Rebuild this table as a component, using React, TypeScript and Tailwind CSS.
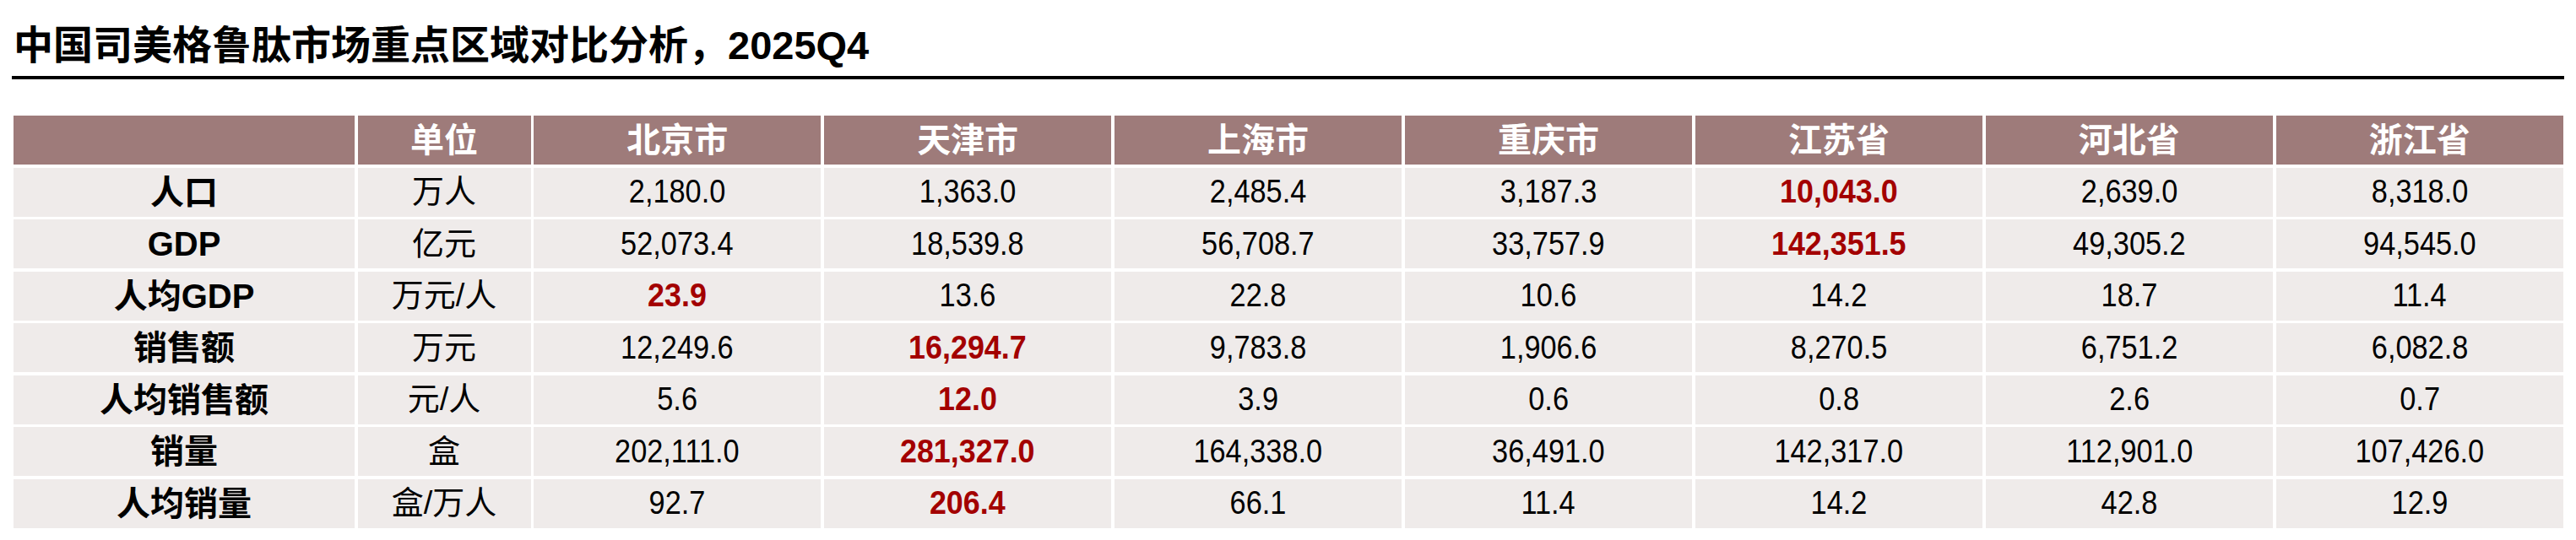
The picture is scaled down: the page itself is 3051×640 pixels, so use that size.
const regions = ["北京市", "天津市", "上海市", "重庆市", "江苏省", "河北省", "浙江省"];

type Row = { label: string; unit: string; values: string[]; top: number };

// top = index of the region with the highest value (shown in red)
const rows: Row[] = [
  { label: "人口", unit: "万人", values: ["2,180.0", "1,363.0", "2,485.4", "3,187.3", "10,043.0", "2,639.0", "8,318.0"], top: 4 },
  { label: "GDP", unit: "亿元", values: ["52,073.4", "18,539.8", "56,708.7", "33,757.9", "142,351.5", "49,305.2", "94,545.0"], top: 4 },
  { label: "人均GDP", unit: "万元/人", values: ["23.9", "13.6", "22.8", "10.6", "14.2", "18.7", "11.4"], top: 0 },
  { label: "销售额", unit: "万元", values: ["12,249.6", "16,294.7", "9,783.8", "1,906.6", "8,270.5", "6,751.2", "6,082.8"], top: 1 },
  { label: "人均销售额", unit: "元/人", values: ["5.6", "12.0", "3.9", "0.6", "0.8", "2.6", "0.7"], top: 1 },
  { label: "销量", unit: "盒", values: ["202,111.0", "281,327.0", "164,338.0", "36,491.0", "142,317.0", "112,901.0", "107,426.0"], top: 1 },
  { label: "人均销量", unit: "盒/万人", values: ["92.7", "206.4", "66.1", "11.4", "14.2", "42.8", "12.9"], top: 1 },
];

const font = "font-['Liberation_Sans','Noto_Sans_CJK_SC',sans-serif]";

export default function App() {
  return (
    <div className={`h-[640px] w-[3051px] overflow-hidden bg-white ${font}`}>
      <h1 className="pl-[16px] pt-[28px] text-[47px] font-bold leading-[52px] text-black">
        中国司美格鲁肽市场重点区域对比分析，2025Q4
      </h1>
      <div className="ml-[14px] mt-[10px] h-[4px] w-[3023px] bg-black" />

      <div className="ml-[16px] mt-[43px] grid w-[3020px] grid-cols-[404px_205px_repeat(7,1fr)] gap-x-[3.5px] gap-y-[3.5px]">
        <div className="h-[58px] bg-[#9e7b7a]" />
        <div className="flex h-[58px] items-center justify-center bg-[#9e7b7a] text-[40px] font-bold text-white">单位</div>
        {regions.map((r) => (
          <div key={r} className="flex h-[58px] items-center justify-center bg-[#9e7b7a] text-[40px] font-bold text-white">
            {r}
          </div>
        ))}

        {rows.map((row) => (
          <>
            <div key={row.label} className="flex h-[58px] items-center justify-center bg-[#efebea] text-[40px] font-bold text-black">
              {row.label}
            </div>
            <div className="flex h-[58px] items-center justify-center bg-[#efebea] text-[38px] text-black">{row.unit}</div>
            {row.values.map((v, i) => (
              <div key={row.label + i} className="flex h-[58px] items-center justify-center bg-[#efebea] text-[39px]">
                {i === row.top ? (
                  <span className="inline-block scale-x-[0.92] font-bold text-[#a30000]">{v}</span>
                ) : (
                  <span className="inline-block scale-x-[0.88] text-black">{v}</span>
                )}
              </div>
            ))}
          </>
        ))}
      </div>
    </div>
  );
}
